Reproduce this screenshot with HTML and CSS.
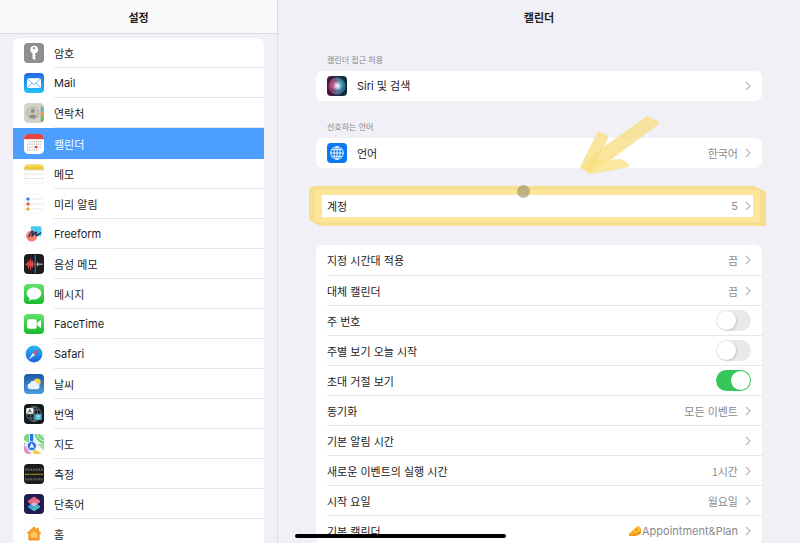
FILE: index.html
```html
<!DOCTYPE html>
<html lang="ko">
<head>
  <meta charset="UTF-8">
  <meta name="viewport" content="width=device-width, initial-scale=1">
  <title>설정</title>
  <link rel="stylesheet" href="styles.css">
</head>
<body>

<!-- shared gradients -->
<svg class="defs" width="0" height="0" aria-hidden="true">
  <defs>
    <linearGradient id="mailBg" x1="0" y1="0" x2="0" y2="1"><stop offset="0" stop-color="#2468e6"/><stop offset="1" stop-color="#22c3f6"/></linearGradient>
    <linearGradient id="greenBg" x1="0" y1="0" x2="0" y2="1"><stop offset="0" stop-color="#62e36a"/><stop offset="1" stop-color="#17bb2e"/></linearGradient>
    <linearGradient id="notesBg" x1="0" y1="0" x2="0" y2="1"><stop offset="0" stop-color="#fbdc5c"/><stop offset="1" stop-color="#eac12c"/></linearGradient>
    <linearGradient id="safariBg" x1="0" y1="0" x2="0" y2="1"><stop offset="0" stop-color="#2fb8f8"/><stop offset="1" stop-color="#1c62e0"/></linearGradient>
    <linearGradient id="skyBg" x1="0" y1="0" x2="0" y2="1"><stop offset="0" stop-color="#1f58a8"/><stop offset="1" stop-color="#4a9be0"/></linearGradient>
    <linearGradient id="redShape" x1="0" y1="0" x2="1" y2="1"><stop offset="0" stop-color="#f2557c"/><stop offset="1" stop-color="#f29a8c"/></linearGradient>
    <linearGradient id="blueShape" x1="0" y1="0" x2="1" y2="1"><stop offset="0" stop-color="#2b7fe0"/><stop offset="1" stop-color="#55d9b5"/></linearGradient>
    <linearGradient id="homeBg" x1="0" y1="0" x2="0" y2="1"><stop offset="0" stop-color="#f7a53c"/><stop offset="1" stop-color="#f58f1d"/></linearGradient>
    <linearGradient id="siriBg" x1="0" y1="0" x2="1" y2="0"><stop offset="0" stop-color="#5c0f35"/><stop offset=".5" stop-color="#252c4c"/><stop offset="1" stop-color="#06303c"/></linearGradient>
    <linearGradient id="siriOrb" x1="0" y1="0" x2="1" y2="0"><stop offset="0" stop-color="#c01c60"/><stop offset=".5" stop-color="#6a7fa8"/><stop offset="1" stop-color="#1a70c8"/></linearGradient>
    <radialGradient id="siriGlow"><stop offset="0" stop-color="#fff"/><stop offset=".3" stop-color="#e5eefa" stop-opacity=".85"/><stop offset="1" stop-color="#fff" stop-opacity="0"/></radialGradient>
    <clipPath id="tile"><rect width="20" height="20" rx="4.5"/></clipPath>
  </defs>
</svg>

<div class="app">
  <nav class="sidebar">
    <header class="sidebar-header"><h1>설정</h1></header>
    <ul class="menu">
      <li><a href="#">
        <svg class="icon" viewBox="0 0 20 20"><rect width="20" height="20" rx="4" fill="#8e8e93"/><path fill="#fff" fill-rule="evenodd" d="M10 2.8a3.9 3.9 0 0 0-1.5 7.4v5l1.5 1.9 1.9-1.9-1.2-1.2 1.2-1.3-1.1-1.3.9-1.1A3.9 3.9 0 0 0 10 2.8zm0 1.3a1.1 1.1 0 1 1 0 2.2 1.1 1.1 0 0 1 0-2.2z"/></svg>
        <span class="label">암호</span></a></li>
      <li><a href="#">
        <svg class="icon" viewBox="0 0 20 20"><rect width="20" height="20" rx="4" fill="url(#mailBg)"/><rect x="3" y="5.2" width="14" height="9.8" rx="1.6" fill="#fff"/><path d="M3.5 5.8l5.4 5q1.1.9 2.2 0l5.4-5M3.6 14.5l4.6-4.3M16.4 14.5l-4.6-4.3" fill="none" stroke="#4aa0e8" stroke-width=".8"/></svg>
        <span class="label latin">Mail</span></a></li>
      <li><a href="#">
        <svg class="icon" viewBox="0 0 20 20"><g clip-path="url(#tile)"><rect width="20" height="20" fill="#d5d2c7"/><path fill="#6bb9d6" d="M17 4h3v5h-3z"/><path fill="#f2a03d" d="M17 9h3v5h-3z"/><path fill="#69c06a" d="M17 14h3v5h-3z"/><path fill="#8c8b83" d="M16.8 2h.6v16h-.6z"/></g><circle cx="8.8" cy="10" r="6" fill="#c9c6bb" stroke="#a9a79d" stroke-width=".7"/><circle cx="8.8" cy="8.1" r="2" fill="#8f8e86"/><path d="M4.7 13.8q4.1-4.4 8.2 0-4.1 3.5-8.2 0z" fill="#8f8e86"/></svg>
        <span class="label">연락처</span></a></li>
      <li class="active"><a href="#" aria-current="page">
        <svg class="icon" viewBox="0 0 20 20"><g clip-path="url(#tile)"><rect width="20" height="20" fill="#fff"/><rect width="20" height="5.2" fill="#e8453f"/></g><g fill="none" stroke="#a08c8c" stroke-width="1" stroke-dasharray="1 1.2"><path d="M5.4 7.8h12M3.2 10.2h14M3.2 13.1h14M3.2 16h10"/></g><circle cx="12.2" cy="13.1" r="1.3" fill="#e6392f"/></svg>
        <span class="label">캘린더</span></a></li>
      <li><a href="#">
        <svg class="icon" viewBox="0 0 20 20"><g clip-path="url(#tile)"><rect width="20" height="20" fill="#fff"/><rect width="20" height="5.6" fill="url(#notesBg)"/></g><path d="M0 6.2h20" stroke="#b3a980" stroke-width=".6" stroke-dasharray=".8 .6"/><path d="M0 10h20M0 14.5h20" stroke="#dadada" stroke-width=".7"/><rect x=".3" y=".3" width="19.4" height="19.4" rx="4" fill="none" stroke="#e9e9e9" stroke-width=".5"/></svg>
        <span class="label">메모</span></a></li>
      <li><a href="#">
        <svg class="icon" viewBox="0 0 20 20"><rect x=".3" y=".3" width="19.4" height="19.4" rx="4" fill="#fff" stroke="#e6e6e8" stroke-width=".6"/><circle cx="4" cy="5" r="1.8" fill="#3a84ee"/><circle cx="4" cy="10" r="1.8" fill="#ec5a4c"/><circle cx="4" cy="15" r="1.8" fill="#f3a23b"/><path d="M8 5h10M8 10h10M8 15h10" stroke="#d8d8da" stroke-width=".7"/></svg>
        <span class="label">미리 알림</span></a></li>
      <li><a href="#">
        <svg class="icon" viewBox="0 0 20 20"><rect x=".3" y=".3" width="19.4" height="19.4" rx="4" fill="#fff" stroke="#f1f1f3" stroke-width=".6"/><rect x="6.8" y="2.3" width="10.6" height="10" rx="1" fill="#4fc6ee"/><circle cx="7.7" cy="12" r="5.6" fill="#f4836f"/><path d="M5 12.6c1.4-3.6 3.3-6 4-5 .8 1.2-2 4.4-.9 4.5 1.2 0 2.7-4.4 4-4 1 .4-.9 3.3.3 3.5 1.3.1 2.3-1.5 4.3-2.7" fill="none" stroke="#1b2a5a" stroke-width="1.3" stroke-linecap="round"/></svg>
        <span class="label latin">Freeform</span></a></li>
      <li><a href="#">
        <svg class="icon" viewBox="0 0 20 20"><rect width="20" height="20" rx="4" fill="#1d1d20"/><path d="M1 10.3l1.2-1.2 1 .6L4.1 6l1 2.4L6.6 3.6l1.1 4.3 1-2.1.8 3.4h1v2h-1l-.7 3.2-1.1-2.3-1 5-1.4-5.3-1 3.6-1-4.3-1.2.6z" fill="#d8413d"/><path d="M11.2 1v18" stroke="#2f8de0" stroke-width="1"/><path d="M12 10.2h7M13.5 8v4.5M15 9v2.4M17 9.4v1.5" stroke="#c3c5ca" stroke-width=".8"/></svg>
        <span class="label">음성 메모</span></a></li>
      <li><a href="#">
        <svg class="icon" viewBox="0 0 20 20"><rect width="20" height="20" rx="4" fill="url(#greenBg)"/><path d="M10 3.5c-4.1 0-7.2 2.6-7.2 5.9 0 2 1.1 3.7 2.9 4.8 0 1-.5 1.8-1.2 2.5 1.4-.1 2.6-.6 3.5-1.5.6.1 1.3.2 2 .2 4.1 0 7.2-2.7 7.2-6s-3.1-5.9-7.2-5.9z" fill="#fff"/></svg>
        <span class="label">메시지</span></a></li>
      <li><a href="#">
        <svg class="icon" viewBox="0 0 20 20"><rect width="20" height="20" rx="4" fill="url(#greenBg)"/><rect x="3" y="5.3" width="9.7" height="9.4" rx="2.2" fill="#fff"/><path d="M13.4 8.7l3-2.4q.6-.4.6.3v6.8q0 .7-.6.3l-3-2.4z" fill="#fff"/></svg>
        <span class="label latin">FaceTime</span></a></li>
      <li><a href="#">
        <svg class="icon" viewBox="0 0 20 20"><rect x=".3" y=".3" width="19.4" height="19.4" rx="4" fill="#fff" stroke="#ececee" stroke-width=".6"/><circle cx="10" cy="10" r="8.4" fill="url(#safariBg)"/><path d="M15.4 4.6l-4.4 6.4-2-2z" fill="#ec4b44"/><path d="M4.6 15.4l4.4-6.4 2 2z" fill="#f4f6fa"/></svg>
        <span class="label latin">Safari</span></a></li>
      <li><a href="#">
        <svg class="icon" viewBox="0 0 20 20"><rect width="20" height="20" rx="4" fill="url(#skyBg)"/><circle cx="13.2" cy="8" r="3.5" fill="#f8d04c"/><path d="M6 15.2a3 3 0 0 1-.2-5.9 4.1 4.1 0 0 1 7.7.6 2.8 2.8 0 0 1 .5 5.3z" fill="#eaf2fb"/></svg>
        <span class="label">날씨</span></a></li>
      <li><a href="#">
        <svg class="icon" viewBox="0 0 20 20"><rect width="20" height="20" rx="4" fill="#13191d"/><g fill="none" stroke="#758b90" stroke-width=".7"><circle cx="10" cy="10" r="7.4"/><ellipse cx="10" cy="10" rx="3.7" ry="7.4"/><path d="M10 2.6v14.8M2.6 10h14.8M4 6h12M4 14h12"/></g><rect x="2.2" y="4" width="7.2" height="5.8" rx="1.2" fill="#f4f6f6"/><path d="M4.3 8.6l1.5-3.5 1.5 3.5M4.8 7.5h2" fill="none" stroke="#333" stroke-width=".7"/><rect x="10.4" y="10.3" width="7.4" height="5.8" rx="1.2" fill="#39b2c8"/><path d="M12 12h4.2M14 11.2v.8M12.5 15l3-3M15.6 15l-2.6-2.6" stroke="#e8fafd" stroke-width=".6"/></svg>
        <span class="label">번역</span></a></li>
      <li><a href="#">
        <svg class="icon" viewBox="0 0 20 20"><g clip-path="url(#tile)"><rect width="20" height="20" fill="#f2f3ee"/><path d="M0 0h5v10H0z" fill="#7fd08b"/><path d="M10.5 0H20v10q-7-1-9.5-10z" fill="#6fd47c"/><path d="M13 0q1 5 7 7M16 0q1 3 4 3.5" fill="none" stroke="#eef8ee" stroke-width="1"/><path d="M0 10l7 10H0z" fill="#e291cf"/><path d="M10 20l-1.5-3 3-2 7 5z" fill="#f6cc44"/><path d="M13 10l7 6v-6z" fill="#a5dfa0"/><path d="M0 7l20 13" stroke="#fff" stroke-width="2"/><path d="M7.6 0v10" stroke="#2375e6" stroke-width="3.2"/></g><circle cx="7.8" cy="12" r="4.6" fill="#2173e6" stroke="#fff" stroke-width=".7"/><path d="M7.8 8.7l2.5 5.7-2.5-1.2-2.5 1.2z" fill="#fff"/></svg>
        <span class="label">지도</span></a></li>
      <li><a href="#">
        <svg class="icon" viewBox="0 0 20 20"><rect width="20" height="20" rx="4" fill="#1b1b1d"/><path d="M1 5.3h18M1 15h18" stroke="#98989c" stroke-width="1.5" stroke-dasharray=".6 1"/><path d="M1 6.4h18M1 16h18" stroke="#68686c" stroke-width=".5"/><path d="M1 10.3h18" stroke="#d7b72f" stroke-width=".9" stroke-dasharray="2 .3"/></svg>
        <span class="label">측정</span></a></li>
      <li><a href="#">
        <svg class="icon" viewBox="0 0 20 20"><rect width="20" height="20" rx="4" fill="#201d52"/><path d="M10 17.3L4.3 13.4q-.9-.8 0-1.5L10 7.8l5.7 4.1q.9.7 0 1.5z" fill="url(#blueShape)"/><path d="M9 3q1-.7 2 0l4.7 3.4q1 .9 0 1.8L10 12.4 4.3 8.2q-1-.9 0-1.8z" fill="url(#redShape)" opacity=".92"/><path d="M7.2 10.3L10 8.3l2.8 2-2.8 2z" fill="#cfc3dc"/></svg>
        <span class="label">단축어</span></a></li>
      <li><a href="#">
        <svg class="icon" viewBox="0 0 20 20"><rect x=".3" y=".3" width="19.4" height="19.4" rx="4" fill="#fff" stroke="#ececee" stroke-width=".6"/><path d="M9.3 3q.7-.6 1.4 0l2.3 2V3.8h2v3l2 1.8q.7 1-.6 1.2h-.7v5.4q0 1.3-1.3 1.3H5.6q-1.3 0-1.3-1.3V9.8h-.7Q2.3 9.6 3 8.6z" fill="url(#homeBg)"/><path d="M10 7l3.6 3.2v3.9H6.4v-3.9z" fill="#fbc65a"/></svg>
        <span class="label">홈</span></a></li>
    </ul>
  </nav>

  <main class="detail">
    <header class="detail-header"><h2>캘린더</h2></header>

    <div class="content">
      <h3 class="section-title">캘린더 접근 허용</h3>
      <div class="card">
        <a class="row" href="#">
          <svg class="icon" viewBox="0 0 20 20"><rect width="20" height="20" rx="4" fill="url(#siriBg)"/><circle cx="10" cy="10" r="8" fill="url(#siriOrb)" stroke="#8d93ad" stroke-width=".6" opacity=".8"/><path d="M3 8q5-6 13-1-7 0-9 7-4-2-4-6z" fill="#ec6c8d" opacity=".45"/><path d="M9 3q8 0 8 7-3 5-7 5 5-5-1-12z" fill="#35c6b0" opacity=".4"/><circle cx="10.5" cy="10" r="4.8" fill="url(#siriGlow)"/></svg>
          <span class="label latin">Siri 및 검색</span>
          <svg class="chevron" viewBox="0 0 6 10"><path d="M1 1l4 4-4 4"/></svg>
        </a>
      </div>

      <h3 class="section-title">선호하는 언어</h3>
      <div class="card">
        <a class="row" href="#">
          <svg class="icon" viewBox="0 0 20 20"><rect width="20" height="20" rx="4" fill="#0b79f0"/><g fill="none" stroke="#fff" stroke-width=".9"><circle cx="10" cy="10" r="6.3"/><ellipse cx="10" cy="10" rx="3" ry="6.3"/><path d="M10 3.7v12.6M3.7 10h12.6M4.9 6.7h10.2M4.9 13.3h10.2"/></g></svg>
          <span class="label">언어</span>
          <span class="value">한국어</span>
          <svg class="chevron" viewBox="0 0 6 10"><path d="M1 1l4 4-4 4"/></svg>
        </a>
      </div>

      <div class="card accounts">
        <a class="row" href="#">
          <span class="label">계정</span>
          <span class="value latin">5</span>
          <svg class="chevron" viewBox="0 0 6 10"><path d="M1 1l4 4-4 4"/></svg>
        </a>
        <!-- highlighter marks -->
        <div class="marker"></div>
        <div class="touch-dot"></div>
        <svg class="arrow" viewBox="0 0 82 62">
          <path d="M69 2L80 7 81 10 34 45 12 56 8 47 24 34z" fill="#f8de86" opacity=".8"/>
          <path d="M20 17L30 22 30 25 22 40 12 60 2 53z" fill="#f8de86" opacity=".8"/>
          <path d="M2 53L14 47 43 45 50 49 51 53 13 60z" fill="#fbe07e" opacity=".75"/>
        </svg>
      </div>

      <div class="card">
        <a class="row" href="#">
          <span class="label">지정 시간대 적용</span>
          <span class="value">끔</span>
          <svg class="chevron" viewBox="0 0 6 10"><path d="M1 1l4 4-4 4"/></svg>
        </a>
        <a class="row" href="#">
          <span class="label">대체 캘린더</span>
          <span class="value">끔</span>
          <svg class="chevron" viewBox="0 0 6 10"><path d="M1 1l4 4-4 4"/></svg>
        </a>
        <div class="row">
          <label class="label" for="weekNumbers">주 번호</label>
          <input class="switch" type="checkbox" id="weekNumbers">
        </div>
        <div class="row">
          <label class="label" for="weekStartsToday">주별 보기 오늘 시작</label>
          <input class="switch" type="checkbox" id="weekStartsToday">
        </div>
        <div class="row">
          <label class="label" for="showDeclined">초대 거절 보기</label>
          <input class="switch" type="checkbox" id="showDeclined" checked>
        </div>
        <a class="row" href="#">
          <span class="label">동기화</span>
          <span class="value">모든 이벤트</span>
          <svg class="chevron" viewBox="0 0 6 10"><path d="M1 1l4 4-4 4"/></svg>
        </a>
        <a class="row" href="#">
          <span class="label">기본 알림 시간</span>
          <svg class="chevron" viewBox="0 0 6 10"><path d="M1 1l4 4-4 4"/></svg>
        </a>
        <a class="row" href="#">
          <span class="label">새로운 이벤트의 실행 시간</span>
          <span class="value">1시간</span>
          <svg class="chevron" viewBox="0 0 6 10"><path d="M1 1l4 4-4 4"/></svg>
        </a>
        <a class="row" href="#">
          <span class="label">시작 요일</span>
          <span class="value">월요일</span>
          <svg class="chevron" viewBox="0 0 6 10"><path d="M1 1l4 4-4 4"/></svg>
        </a>
        <a class="row" href="#">
          <span class="label">기본 캘린더</span>
          <span class="value latin"><svg class="cheese" viewBox="0 0 14 12"><path d="M1 8.5L9.5 1q3 .2 3.8 3.5L8 8z" fill="#fbc02d"/><path d="M1 8.5L8 8l5.3-3.5-.5 4L8 11H1z" fill="#f59a12"/><circle cx="8.5" cy="4.5" r="1.1" fill="#d98a0c"/><circle cx="5" cy="7" r=".7" fill="#d98a0c"/><circle cx="10.5" cy="7.8" r=".9" fill="#c97808"/></svg>Appointment&amp;Plan</span>
          <svg class="chevron" viewBox="0 0 6 10"><path d="M1 1l4 4-4 4"/></svg>
        </a>
      </div>
    </div>
  </main>
</div>

<div class="home-indicator"></div>

</body>
</html>
```
FILE: styles.css
```css
* {
  box-sizing: border-box;
}

body {
  margin: 0;
  font-family: "Noto Sans CJK KR", sans-serif;
  font-size: 11px;
  line-height: 16px;
  background: #f1f0f6;
  color: #1c1c1e;
}

h1, h2, h3 {
  margin: 0;
}

a {
  color: inherit;
  text-decoration: none;
}

.defs {
  position: absolute;
}

.app {
  display: flex;
  height: 100vh;
  overflow: hidden;
}

/* left column */
.sidebar {
  flex: 0 0 278px;
  display: flex;
  flex-direction: column;
  border-right: 1px solid #dcdce1;
}

.sidebar-header,
.detail-header {
  flex: none;
  padding: 9px 0 8px;
  text-align: center;
}

.sidebar-header {
  background: #fafafb;
  border-bottom: 1px solid #d9d9df;
}

.sidebar-header h1,
.detail-header h2 {
  font-size: 11px;
  font-weight: 600;
}

.menu {
  list-style: none;
  margin: 4px 13px 0;
  padding: 0;
  background: #fff;
  border-radius: 7px 7px 0 0;
  overflow-y: auto;
  scrollbar-width: none;
}

.menu a {
  display: flex;
  align-items: center;
  gap: 10px;
  padding-left: 11px;
}

.menu .label {
  flex: 1;
  padding: 7px 0 6px;
  border-bottom: 1px solid #e6e6e9;
}

.menu .active {
  background: #4c9fff;
  color: #fff;
}

.menu .active .label {
  padding: 8px 0 7px;
  border-bottom: none;
}

.icon {
  flex: none;
  display: block;
  width: 20px;
  height: 20px;
}

.latin {
  font-family: Inter, "Noto Sans CJK KR", sans-serif;
}

/* right column */
.detail {
  flex: 1;
  min-width: 0;
  overflow-y: auto;
  scrollbar-width: none;
}

.content {
  padding: 21px 38px 0;
}

.section-title {
  padding: 0 11px 5px;
  font-size: 8px;
  line-height: 12px;
  font-weight: 400;
  color: #85858b;
}

.card {
  margin-bottom: 20px;
  background: #fff;
  border-radius: 7px;
}

.row {
  display: flex;
  align-items: center;
  height: 30px;
  margin-left: 11px;
  padding-right: 11px;
}

.row + .row {
  border-top: 1px solid #e6e6e9;
}

.row .icon {
  margin-right: 10px;
}

.row .label {
  flex: 1;
}

.value {
  display: flex;
  align-items: center;
  color: #8a8a8e;
}

.chevron {
  flex: none;
  width: 6px;
  height: 10px;
  margin-left: 7px;
  fill: none;
  stroke: #bcbcc0;
  stroke-width: 1.3;
}

.cheese {
  width: 14px;
  height: 12px;
}

.switch {
  appearance: none;
  position: relative;
  width: 35px;
  height: 21px;
  margin: 0;
  border-radius: 11px;
  background: #e9e9ea;
}

.switch::before {
  content: "";
  position: absolute;
  top: 1px;
  left: 1px;
  width: 19px;
  height: 19px;
  border-radius: 50%;
  background: #fff;
  box-shadow: 1px 1px 2px rgba(0, 0, 0, 0.15);
}

.switch:checked {
  background: #35c759;
}

.switch:checked::before {
  left: 15px;
  box-shadow: none;
}

/* pen marks over the accounts row */
.accounts {
  position: relative;
  margin: 23px 0 24px;
}

.marker {
  position: absolute;
  inset: -5px -4px -5px -7px;
  border: 9px solid #f8df8f;
  border-width: 9px 13px;
  clip-path: polygon(0 3px, 3px 0, calc(100% - 12px) 0, 100% 6px, 100% 100%, 11px 100%, 0 34px);
  pointer-events: none;
}

.marker::before {
  content: "";
  position: absolute;
  inset: -5px -7px;
  border: 5px solid #fde59a;
  border-width: 5px 7px;
}

.touch-dot {
  position: absolute;
  top: -6px;
  left: 45%;
  width: 13px;
  height: 13px;
  border-radius: 50%;
  background: rgba(150, 140, 110, 0.6);
}

.arrow {
  position: absolute;
  top: -77px;
  right: 102px;
  width: 82px;
  height: 62px;
  pointer-events: none;
}

.home-indicator {
  position: fixed;
  left: 0;
  right: 0;
  bottom: 5px;
  width: 211px;
  height: 4px;
  margin: 0 auto;
  border-radius: 2px;
  background: #000;
}
```
